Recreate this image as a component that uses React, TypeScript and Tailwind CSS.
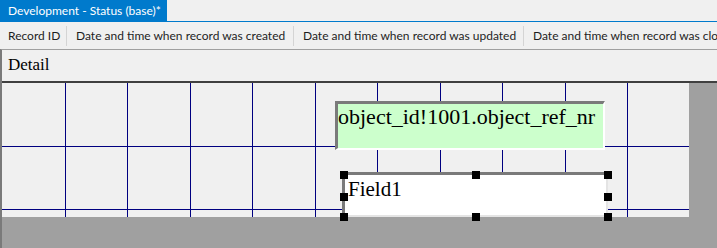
import React from "react";

const columns = [
  { label: "Record ID", w: "w-[66px]" },
  { label: "Date and time when record was created", w: "w-[227px]" },
  { label: "Date and time when record was updated", w: "w-[230px]" },
  { label: "Date and time when record was closed", w: "w-[260px]" },
];

const gridX = [63, 125, 188, 250, 313, 375, 438, 500, 563, 625];
const gridY = [63, 126];

// handle positions (relative to the canvas)
const handles = [
  [338, 88], [470, 88], [602, 88],
  [338, 110], [602, 110],
  [338, 130], [470, 130], [602, 130],
];

export default function App() {
  return (
    <div className="w-[717px] h-[248px] bg-[#f0f0f0] flex flex-col overflow-hidden font-['Lato',sans-serif]">
      {/* Tab strip */}
      <div className="h-[22px] shrink-0 flex border-b border-[#007acc]">
        <div className="w-[167px] h-[21px] bg-[#007acc] px-[8px] text-[12px] leading-[21px] text-white whitespace-nowrap">
          Development - Status (base)*
        </div>
      </div>

      {/* Column header row */}
      <div className="h-[27px] shrink-0 flex items-center text-[12px] text-[#1e1e1e] overflow-hidden">
        {columns.map((c, i) => (
          <div key={c.label} className={`${c.w} flex items-center shrink-0`}>
            {i > 0 && <div className="w-px h-[20px] bg-[#d4d4d4] shrink-0" />}
            <span className={`${i > 0 ? "pl-[9px]" : "pl-[8px]"} whitespace-nowrap`}>{c.label}</span>
          </div>
        ))}
      </div>

      {/* Detail section */}
      <div className="flex-1 flex flex-col border-t border-[#a0a0a0] border-l-2 border-l-[#7a7a7a]">
        <div className="h-[31px] shrink-0 px-[6px] pt-[5px] text-[17px] leading-[20px] text-black font-['Liberation_Serif',serif]">
          Detail
        </div>
        <div className="h-[2px] shrink-0 bg-[#404040]" />
        <div className="flex-1 flex flex-col bg-[#a0a0a0]">
          <div className="relative w-[687px] h-[134px] shrink-0 bg-[#f0f0f0]">
            <svg className="absolute inset-0" width="687" height="134">
              {gridX.map((x) => (
                <line key={`x${x}`} x1={x + 0.5} y1={0} x2={x + 0.5} y2={134} stroke="#000080" strokeWidth={1} />
              ))}
              {gridY.map((y) => (
                <line key={`y${y}`} x1={0} y1={y + 0.5} x2={687} y2={y + 0.5} stroke="#000080" strokeWidth={1} />
              ))}
            </svg>

            {/* bound text box */}
            <div className="absolute left-[333px] top-[18px] w-[270px] h-[49px] bg-[#ccffcc] border-[3px] border-t-[#7a7a7a] border-l-[#7a7a7a] border-r-white border-b-white border-r-2 border-b-2 font-['Liberation_Serif',serif] text-[22px] leading-[26px] text-black whitespace-nowrap">
              object_id!1001.object_ref_nr
            </div>

            {/* selected field */}
            <div className="absolute left-[340px] top-[89px] w-[266px] h-[45px] bg-white border-[3px] border-t-[#7a7a7a] border-l-[#7a7a7a] border-r-[#e4e4e4] border-b-[#e4e4e4] border-r-2 border-b-2 px-[3px] pt-[1px] font-['Liberation_Serif',serif] text-[21px] leading-[26px] text-black">
              Field1
            </div>
            {handles.map(([x, y]) => (
              <div
                key={`${x}-${y}`}
                className="absolute w-[8px] h-[8px] bg-black"
                style={{ left: x, top: y }}
              />
            ))}
          </div>
        </div>
      </div>
    </div>
  );
}
